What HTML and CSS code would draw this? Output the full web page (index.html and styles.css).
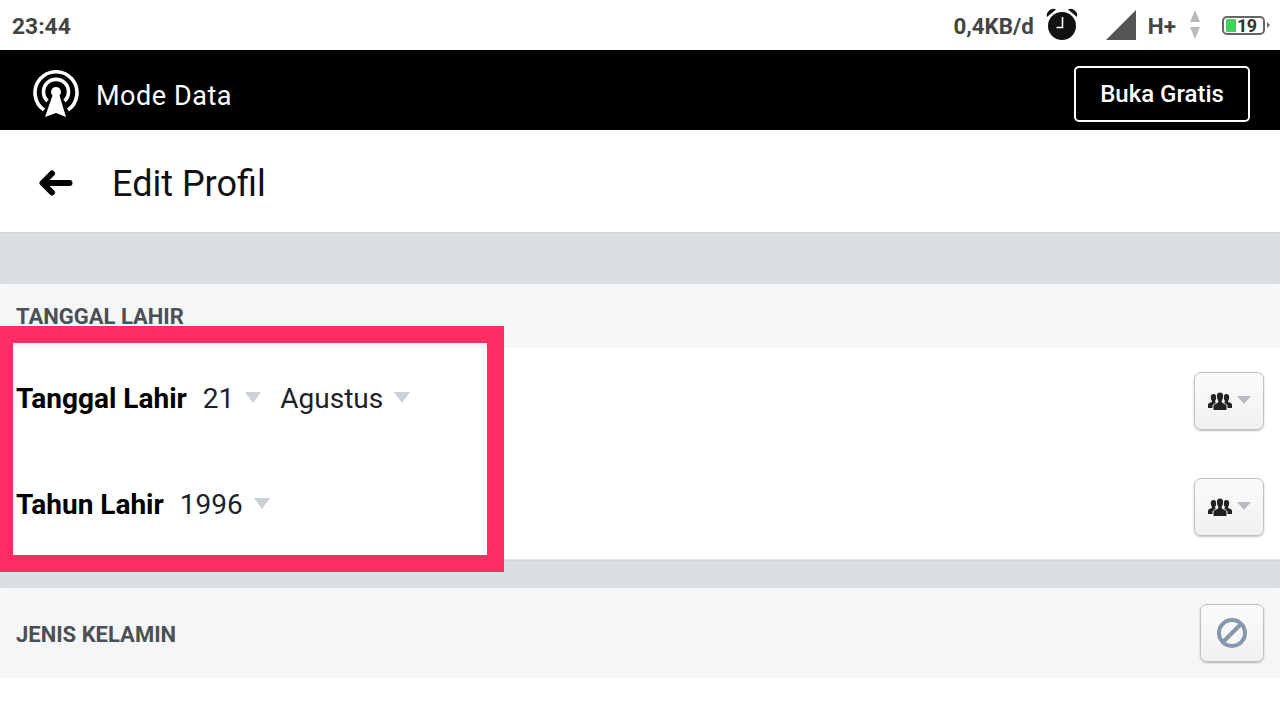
FILE: index.html
```html
<!DOCTYPE html>
<html lang="id">
<head>
<meta charset="utf-8">
<title>Edit Profil</title>
<link rel="stylesheet" href="styles.css">
</head>
<body>
<div class="page">
  <header class="status">
    <span class="time">23:44</span>
    <div class="status-right">
      <span class="speed">0,4KB/d</span>
      <svg class="alarm" width="32" height="34" viewBox="0 0 32 34"><circle cx="16" cy="18" r="14" fill="#111"/><path d="M1 9 A6.500 6.500 0 0 1 10 1.500 Z M31 9 A6.500 6.500 0 0 0 22 1.500 Z" fill="#111"/><path d="M16.500 9 V19.500 H10.500" fill="none" stroke="#fff" stroke-width="1.600"/></svg>
      <svg class="signal" width="30" height="30" viewBox="0 0 30 30"><path d="M0 30 L30 0 V30 Z" fill="#555"/></svg>
      <span class="net">H+</span>
      <svg class="arrows" width="10" height="30" viewBox="0 0 10 30"><path d="M5 0 L10 12 H0 Z M0 17 H10 L5 29 Z" fill="#b9b9b9"/></svg>
      <div class="battery"><span class="battery-fill"></span><span class="battery-num">19</span></div>
      <span class="battery-tip"></span>
    </div>
  </header>
  <div class="databar">
    <div class="mode">
      <svg width="48" height="48" viewBox="0 0 48 48"><g fill="none" stroke="#fff" stroke-width="3.600" stroke-linecap="butt"><path d="M12 40 A21 21 0 1 1 36 40"/><path d="M15.500 31 A12.500 12.500 0 1 1 32.500 31"/></g><path d="M24 17 a5 5 0 0 1 3.500 8.500 L34 47 L24 43 L13 47 L20.500 25.500 A5 5 0 0 1 24 17 Z" fill="#fff"/></svg>
      <span class="mode-label">Mode Data</span>
    </div>
    <span class="free-btn">Buka Gratis</span>
  </div>
  <div class="titlebar">
    <svg class="back" width="34" height="26" viewBox="0 0 34 26"><path d="M13 3.500 L3.500 13 L13 22.500 M4 13 H30.500" fill="none" stroke="#000" stroke-width="6" stroke-linecap="round" stroke-linejoin="round"/></svg>
    <h1 class="title">Edit Profil</h1>
  </div>
  <div class="gap gap-top"></div>
  <section class="section-head head-birth"><h2 class="section-title">TANGGAL LAHIR</h2></section>
  <section class="rows">
    <div class="row">
      <div class="fields">
        <span class="label">Tanggal Lahir</span>
        <span class="select">21<i class="caret"></i></span>
        <span class="select">Agustus<i class="caret"></i></span>
      </div>
      <span class="aud-btn"><svg width="24" height="20" viewBox="0 0 24 20"><path d="M5.500 3 C7.500 3 8.500 4.500 8.300 6.500 C8.100 8.300 7.500 9.500 7 10.300 L7.500 11.500 C9 12 10 13 10 14 V17 H0 V13.500 C0 12.500 2 11.700 3.600 11 L4 10.200 C3.400 9.300 2.900 8 2.800 6.500 C2.600 4.500 3.700 3 5.500 3 Z M18.500 3 C16.500 3 15.500 4.500 15.700 6.500 C15.900 8.300 16.500 9.500 17 10.300 L16.500 11.500 C15 12 14 13 14 14 V17 H24 V13.500 C24 12.500 22 11.700 20.400 11 L20 10.200 C20.600 9.300 21.100 8 21.200 6.500 C21.400 4.500 20.300 3 18.500 3 Z" fill="#222"/><path d="M12 1 C14.800 1 16 3.500 15.500 6 C15.200 8 14.500 9.500 14 10 L14.500 11.500 C17 12.500 19 13.500 19 15 V19.500 H5 V15 C5 13.500 7 12.500 9.500 11.500 L10 10 C9.500 9.500 8.800 8 8.500 6 C8 3.500 9.200 1 12 1 Z" fill="#222" stroke="#f6f7f9" stroke-width="1"/></svg><i class="caret-sm"></i></span>
    </div>
    <div class="row">
      <div class="fields">
        <span class="label">Tahun Lahir</span>
        <span class="select">1996<i class="caret"></i></span>
      </div>
      <span class="aud-btn"><svg width="24" height="20" viewBox="0 0 24 20"><path d="M5.500 3 C7.500 3 8.500 4.500 8.300 6.500 C8.100 8.300 7.500 9.500 7 10.300 L7.500 11.500 C9 12 10 13 10 14 V17 H0 V13.500 C0 12.500 2 11.700 3.600 11 L4 10.200 C3.400 9.300 2.900 8 2.800 6.500 C2.600 4.500 3.700 3 5.500 3 Z M18.500 3 C16.500 3 15.500 4.500 15.700 6.500 C15.900 8.300 16.500 9.500 17 10.300 L16.500 11.500 C15 12 14 13 14 14 V17 H24 V13.500 C24 12.500 22 11.700 20.400 11 L20 10.200 C20.600 9.300 21.100 8 21.200 6.500 C21.400 4.500 20.300 3 18.500 3 Z" fill="#222"/><path d="M12 1 C14.800 1 16 3.500 15.500 6 C15.200 8 14.500 9.500 14 10 L14.500 11.500 C17 12.500 19 13.500 19 15 V19.500 H5 V15 C5 13.500 7 12.500 9.500 11.500 L10 10 C9.500 9.500 8.800 8 8.500 6 C8 3.500 9.200 1 12 1 Z" fill="#222" stroke="#f6f7f9" stroke-width="1"/></svg><i class="caret-sm"></i></span>
    </div>
  </section>
  <div class="gap gap-mid"></div>
  <section class="section-head head-gender">
    <h2 class="section-title">JENIS KELAMIN</h2>
    <span class="block-btn"><svg width="32" height="32" viewBox="0 0 32 32"><circle cx="16" cy="16" r="13" fill="none" stroke="#8796ac" stroke-width="4"/><path d="M7 25 L25 7" stroke="#8796ac" stroke-width="4"/></svg></span>
  </section>
  <div class="highlight"></div>
</div>
</body>
</html>
```
FILE: styles.css
```css
* { box-sizing: border-box; }
html, body { margin: 0; padding: 0; }
body { font-family: Roboto, "Liberation Sans", sans-serif; background: #fff; }
.page { position: relative; width: 1280px; height: 720px; overflow: hidden; background: #fff; }

.status { height: 50px; display: flex; align-items: center; justify-content: space-between; padding: 2px 10px 0 12px; color: #444; font-weight: 700; font-size: 23px; }
.time { font-size: 22.800px; }
.status-right { display: flex; align-items: center; }
.speed { margin-right: 12px; font-size: 22.300px; }
.alarm { margin-right: 27px; margin-top: -3px; }
.signal { margin-right: 12px; margin-top: -2px; margin-left: 1px; }
.net { margin-right: 14px; font-size: 22.500px; }
.arrows { margin-right: 22px; margin-top: -2px; }
.battery { width: 43px; height: 19px; margin-top: -2px; border: 2px solid #666; border-radius: 5px; display: flex; align-items: center; padding-left: 2px; }
.battery-fill { width: 10px; height: 13px; background: #3fd35a; border-radius: 1px; }
.battery-num { font-size: 18px; font-weight: 700; color: #333; margin-left: 1px; letter-spacing: -0.5px; }
.battery-tip { width: 0; height: 0; margin-left: 2px; margin-top: -2px; border-left: 3px solid #666; border-top: 3px solid transparent; border-bottom: 3px solid transparent; }

.databar { height: 80px; background: #000; display: flex; align-items: center; justify-content: space-between; padding: 8px 30px 0 32px; color: #fff; }
.mode { display: flex; align-items: center; gap: 16px; }
.mode-label { font-size: 27px; letter-spacing: 0.550px; margin-top: 4px; }
.free-btn { width: 176px; height: 56px; border: 2px solid #fff; border-radius: 5px; display: flex; align-items: center; justify-content: center; font-size: 24px; font-weight: 500; }

.titlebar { height: 102px; display: flex; align-items: center; padding: 6px 0 0 39px; gap: 39px; background: #fff; }
.back { margin-top: -2px; }
.title { margin: 0; font-size: 36px; font-weight: 400; color: #111; }

.gap { background: #dadde2; }
.gap-top { height: 52px; box-shadow: inset 0 2px 1px -1px #cfd1d5; }
.gap-mid { height: 28px; box-shadow: inset 0 2px 1px -1px #cfd1d5; }

.section-head { background: #f5f6f8; display: flex; justify-content: space-between; padding-left: 16px; border-radius: 4px 4px 0 0; }
.head-birth { height: 64px; align-items: flex-start; padding-top: 20px; }
.head-gender { height: 90px; align-items: center; padding-right: 16px; }
.head-gender .section-title { margin-top: 4px; }
.section-title { margin: 0; font-size: 22px; line-height: 26px; font-weight: 700; color: #4b4f56; }

.rows { height: 212px; background: #fff; padding: 24px 16px 0; display: flex; flex-direction: column; gap: 48px; border-bottom: 1px solid #e3e5e8; }
.row { height: 58px; display: flex; align-items: center; justify-content: space-between; }
.fields { display: flex; align-items: center; gap: 16px; margin-top: -6px; font-size: 28px; }
.label { font-weight: 700; color: #000; }
.select { display: inline-flex; align-items: center; gap: 11px; color: #1d2129; }
.select + .select { margin-left: 3px; }
.caret { width: 0; height: 0; margin-top: -1px; border-top: 11px solid #cdd0d6; border-left: 8.500px solid transparent; border-right: 8.500px solid transparent; }

.aud-btn, .block-btn { height: 58px; display: flex; align-items: center; justify-content: center; border: 1px solid #bfc1c4; border-radius: 7px; background: linear-gradient(#fafbfc, #f0f1f3); box-shadow: 0 1px 2px rgba(0,0,0,.25); }
.aud-btn { width: 70px; gap: 5px; }
.block-btn { width: 64px; }
.caret-sm { width: 0; height: 0; margin-top: -3px; border-top: 8px solid #b9bbbf; border-left: 7px solid transparent; border-right: 7px solid transparent; }

.highlight { position: absolute; left: -3px; top: 326px; width: 507px; height: 246px; border: 17px solid #ff2d64; border-left-width: 16px; pointer-events: none; }
```
